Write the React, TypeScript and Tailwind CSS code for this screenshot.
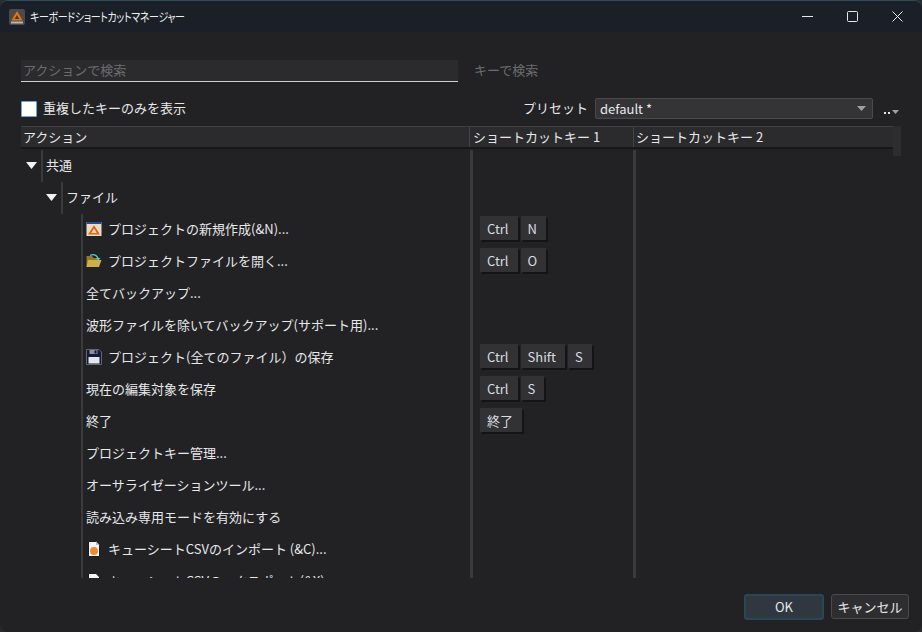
import React from "react";

const FONT = '[font-family:"Noto_Sans_CJK_JP","Noto_Sans",sans-serif]';

function AppLogo() {
  return (
    <svg width="16" height="16" viewBox="0 0 16 16" className="shrink-0">
      <rect x="0" y="0" width="16" height="16" rx="2" fill="#4a4a4a" />
      <path d="M8 2 L13.6 11.5 H2.4 Z" fill="#e8720c" />
      <path d="M8 6 L10.4 10 H5.6 Z" fill="#3d3d3d" />
      <rect x="2" y="12.5" width="12" height="2" fill="#b5b5b5" />
    </svg>
  );
}
function NewIcon() {
  return (
    <svg width="16" height="16" viewBox="0 0 16 16" className="shrink-0">
      <rect x="0.5" y="1" width="15" height="14" fill="#e9dcc6" />
      <rect x="0.5" y="1" width="15" height="2" fill="#1d4f9c" />
      <path d="M8 4.2 L14 13.5 H2 Z" fill="#e4600f" />
      <path d="M8 7.6 L10.8 12 H5.2 Z" fill="#e9dcc6" />
    </svg>
  );
}
function OpenIcon() {
  return (
    <svg width="16" height="16" viewBox="0 0 16 16" className="shrink-0">
      <path d="M0.5 3 H6 L7.5 5 H13 V14 H0.5 Z" fill="#8e7a2c" />
      <path d="M2 7 H15.5 L13 14 H0.5 Z" fill="#cdb04a" />
      <path d="M4 2.5 Q9 0 12 5" stroke="#4fd0c4" strokeWidth="1.3" fill="none" />
      <path d="M10 5 H14.5 L12.5 7.5 Z" fill="#4fd0c4" />
    </svg>
  );
}
function SaveIcon() {
  return (
    <svg width="16" height="16" viewBox="0 0 16 16" className="shrink-0">
      <path d="M0.5 0.5 H13 L15.5 3 V15.5 H0.5 Z" fill="#141a3a" stroke="#62656e" strokeWidth="1" />
      <rect x="3.5" y="1" width="8" height="4" fill="#8d8f96" />
      <rect x="8.5" y="1.5" width="2" height="3" fill="#141a3a" />
      <rect x="2.5" y="8" width="11" height="6.5" fill="#e6e6ea" />
    </svg>
  );
}
function CsvIcon() {
  return (
    <svg width="16" height="16" viewBox="0 0 16 16" className="shrink-0">
      <path d="M2.5 0.5 H10 L13.5 4 V15.5 H2.5 Z" fill="#f4f6f6" stroke="#1a1a1a" strokeWidth="1" />
      <path d="M10 0.5 V4 H13.5" fill="#a9c2c8" />
      <circle cx="8" cy="10" r="4" fill="#ee8a34" />
    </svg>
  );
}
function DocIcon() {
  return (
    <svg width="16" height="16" viewBox="0 0 16 16" className="shrink-0">
      <path d="M2.5 0.5 H10 L13.5 4 V15.5 H2.5 Z" fill="#f4f6f6" stroke="#1a1a1a" strokeWidth="1" />
    </svg>
  );
}

function Arrow() {
  return (
    <svg width="11" height="7" viewBox="0 0 11 7">
      <path d="M0 0 H11 L5.5 7 Z" fill="#f2f2f2" />
    </svg>
  );
}

function Key({ children }: { children: React.ReactNode }) {
  return (
    <span className="h-6 flex items-center pl-[7px] pr-[9px] bg-[#323234] text-[13px] text-[#d8dde2] shadow-[2px_2px_0_#141415] leading-none">
      {children}
    </span>
  );
}

type Row = { level: number; label: string; icon?: React.ReactNode; keys?: string[] };

const rows: Row[] = [
  { level: 0, label: "共通" },
  { level: 1, label: "ファイル" },
  { level: 2, label: "プロジェクトの新規作成(&N)...", icon: <NewIcon />, keys: ["Ctrl", "N"] },
  { level: 2, label: "プロジェクトファイルを開く...", icon: <OpenIcon />, keys: ["Ctrl", "O"] },
  { level: 2, label: "全てバックアップ..." },
  { level: 2, label: "波形ファイルを除いてバックアップ(サポート用)..." },
  { level: 2, label: "プロジェクト(全てのファイル）の保存", icon: <SaveIcon />, keys: ["Ctrl", "Shift", "S"] },
  { level: 2, label: "現在の編集対象を保存", keys: ["Ctrl", "S"] },
  { level: 2, label: "終了", keys: ["終了"] },
  { level: 2, label: "プロジェクトキー管理..." },
  { level: 2, label: "オーサライゼーションツール..." },
  { level: 2, label: "読み込み専用モードを有効にする" },
  { level: 2, label: "キューシートCSVのインポート (&C)...", icon: <CsvIcon /> },
  { level: 2, label: "キューシートCSVのエクスポート(&X)...", icon: <DocIcon /> },
];

function TreeRow({ row }: { row: Row }) {
  return (
    <div className="h-8 flex shrink-0">
      <div className="w-[449px] shrink-0 flex">
        {row.level === 0 && (
          <>
            <div className="w-5 flex items-center justify-end pr-[4px] pb-[2px]"><Arrow /></div>
            <div className="w-[2px] bg-[#3a3a3c]" />
            <div className="ml-[3px] flex items-center pb-[2px]">{row.label}</div>
          </>
        )}
        {row.level === 1 && (
          <>
            <div className="w-10 flex items-center justify-end pr-[4px] pb-[2px]"><Arrow /></div>
            <div className="w-[2px] bg-[#3a3a3c]" />
            <div className="ml-[3px] flex items-center pb-[2px]">{row.label}</div>
          </>
        )}
        {row.level === 2 && (
          <>
            <div className="w-[60px]" />
            <div className="w-[2px] bg-[#3a3a3c]" />
            <div className="ml-[3px] flex items-center gap-[6px] pb-[2px]">
              {row.icon}
              <span className="whitespace-nowrap">{row.label}</span>
            </div>
          </>
        )}
      </div>
      <div className="w-[163px] shrink-0 flex">
        <div className="w-[3px] bg-[#3a3a3c]" />
        <div className="ml-[7px] pt-[2px] flex items-start gap-[3px]">
          {row.keys?.map((k) => <Key key={k}>{k}</Key>)}
        </div>
      </div>
      <div className="w-[3px] bg-[#3a3a3c]" />
    </div>
  );
}

export default function App() {
  return (
    <div className={`w-[922px] h-[632px] bg-[#2b2b2d] overflow-hidden ${FONT}`}>
      <div className="w-full h-full rounded-[8px] bg-[#222224] border-t border-[#2f4a58] flex flex-col text-[13px] text-[#e6e8ea]">
        {/* Title bar */}
        <div className="h-[31px] bg-[#1b1f27] flex items-center pl-[9px] shrink-0 rounded-t-[8px]">
          <AppLogo />
          <span className="ml-[5px] text-[12px] text-[#f0f0f0] [font-feature-settings:'palt'] tracking-[-0.4px] origin-left scale-x-[0.83]">キーボードショートカットマネージャー</span>
          <div className="ml-auto flex items-center pr-[19px]">
            <svg width="11" height="11" viewBox="0 0 11 11" className="mr-[34px]"><path d="M0 5.5 H11" stroke="#e8e8e8" /></svg>
            <svg width="11" height="11" viewBox="0 0 11 11" className="mr-[34px]"><rect x="0.5" y="0.5" width="10" height="10" rx="1" fill="none" stroke="#e8e8e8" /></svg>
            <svg width="11" height="11" viewBox="0 0 11 11"><path d="M0.5 0.5 L10.5 10.5 M10.5 0.5 L0.5 10.5" stroke="#e8e8e8" /></svg>
          </div>
        </div>

        {/* Search */}
        <div className="mt-[28px] ml-[21px] flex shrink-0">
          <div className="w-[437px] h-[22px] bg-[#2b2b2d] border-b border-[#d0d0d0] flex items-center pl-[2px] pb-[2px] text-[#6c6c6e]">
            アクションで検索
          </div>
          <div className="ml-4 h-[22px] flex items-center pb-[2px] text-[13px] text-[#6c6c6e]">キーで検索</div>
        </div>

        {/* Options */}
        <div className="mt-[16px] ml-[21px] h-[21px] flex items-center shrink-0">
          <span className="w-4 h-4 bg-white border border-[#6aa7de] rounded-[1px]" />
          <span className="ml-[6px] mb-[2px] text-[#e6e8ea]">重複したキーのみを表示</span>
          <span className="ml-auto mb-[2px] text-[#e6e8ea]">プリセット</span>
          <div className="ml-[7px] w-[278px] h-[21px] bg-[#343436] border border-[#4a4a4c] rounded-[2px] flex items-center pl-1 pr-[6px]">
            <span className="text-[#e6e8ea]">default *</span>
            <svg width="9" height="5" viewBox="0 0 9 5" className="ml-auto"><path d="M0 0 H9 L4.5 5 Z" fill="#a0a0a2" /></svg>
          </div>
          <div className="ml-[11px] mr-[23px] w-[15px] flex items-center gap-[2px] h-[14px] mt-[7px]">
            <span className="w-[2px] h-[2px] bg-[#e6e8ea] mt-[2px]" />
            <span className="w-[2px] h-[2px] bg-[#e6e8ea] mt-[2px]" />
            <svg width="7" height="4" viewBox="0 0 7 4"><path d="M0 0 H7 L3.5 4 Z" fill="#a0a0a2" /></svg>
          </div>
        </div>

        {/* Table */}
        <div className="mt-[7px] ml-[21px] w-[880px] h-[452px] flex flex-col overflow-hidden shrink-0">
          <div className="h-6 flex shrink-0 text-[#e6e8ea]">
            <div className="w-[872px] h-[23px] flex bg-[#2b2b2d] border-t border-[#3f3f41] border-b-2 border-b-[#171718]">
              <div className="w-[448px] pl-[2px] flex items-center">アクション</div>
              <div className="w-[164px] pl-[3px] border-l border-[#444446] flex items-center">ショートカットキー 1</div>
              <div className="flex-1 pl-[2px] border-l border-[#444446] flex items-center">ショートカットキー 2</div>
            </div>
            <div className="w-2 h-[30px] bg-[#2d2d2f]" />
          </div>
          <div className="flex flex-col overflow-hidden h-[428px]">
            {rows.map((r) => <TreeRow key={r.label} row={r} />)}
          </div>
        </div>

        {/* Footer */}
        <div className="mt-auto mb-[12px] pr-[13px] flex justify-end gap-[7px] shrink-0">
          <button className="w-[80px] h-[26px] rounded-[3px] bg-[#2f3740] border-2 border-[#2c4655] text-[13px] text-[#e6e8ea]">OK</button>
          <button className="w-[78px] h-[25px] rounded-[3px] bg-[#2e2e30] border border-[#4a4a4c] text-[13px] text-[#e6e8ea]">キャンセル</button>
        </div>
      </div>
    </div>
  );
}
